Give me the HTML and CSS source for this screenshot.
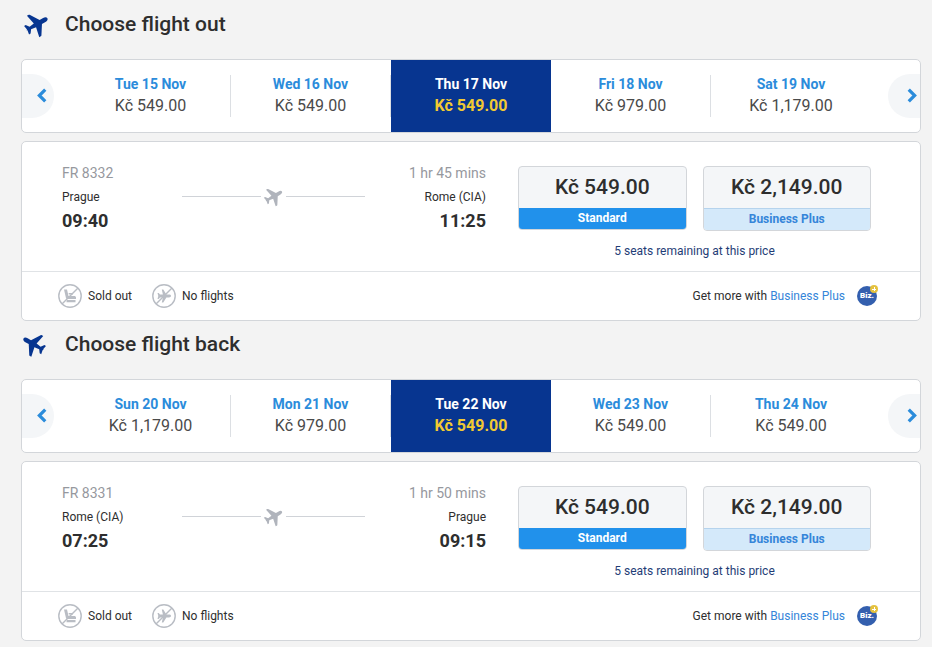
FILE: index.html
```
<!DOCTYPE html>
<html lang="en">

<head>
    <meta charset="utf-8">
    <title>Choose flights</title>
    <link rel="stylesheet" href="styles.css">
</head>

<body>

    <!-- Shared icons -->
    <svg class="sprite" aria-hidden="true">
        <symbol id="plane" viewBox="0 0 24 24">
            <path transform="rotate(60 12 12)" d="M12 .8c-1.300 0-2.100 1.500-2.100 3.200v3.600L1.500 13c-.4.300-.5.600-.5 1v1.500l9-1.900.7 4.700-3.100 2.300v1.600l4-.7.4.800.4-.8 4 .7v-1.600l-3.100-2.300.7-4.700 9 1.900V14c0-.4-.1-.7-.5-1l-8.400-5.400V4C14.100 2.300 13.300.8 12 .8z"/>
        </symbol>
        <symbol id="chevron" viewBox="0 0 10 14">
            <path d="M8.500 1.500L3 7l5.500 5.500" fill="none" stroke="#2b8cdb" stroke-width="3"/>
        </symbol>
        <symbol id="sold-out" viewBox="0 0 24 24">
            <circle cx="12" cy="12" r="11.200" fill="none" stroke="#b9bdc4" stroke-width="1.400"/>
            <path d="M6 5.500h3l1.500 6.500h5.500c1.200 0 2 .6 2 1.400v1.600H9.500c-.9 0-1.400-.4-1.600-1.200zM10.500 9h4.500v1.500h-4zM9 16h8.500v2.200H8.500c0-1.200.1-1.600.5-2.200z" fill="#b9bdc4"/>
            <path d="M4 20L20 4" stroke="#b9bdc4" stroke-width="1.400"/>
        </symbol>
        <symbol id="no-flights" viewBox="0 0 24 24">
            <circle cx="12" cy="12" r="11.200" fill="none" stroke="#b9bdc4" stroke-width="1.400"/>
            <path d="M19 12c0-.9-1-1.400-2-1.400h-2.600L11.300 5.500H9.800l1.100 5.100H8L6.700 9H5.500l.8 3-.8 3h1.200L8 13.400h2.900l-1.100 5.100h1.500l3.100-5.100H17c1 0 2-.5 2-1.400z" fill="#b9bdc4"/>
            <path d="M4 20L20 4" stroke="#b9bdc4" stroke-width="1.400"/>
        </symbol>
    </svg>

    <main>
        <section class="journey">
            <h2><svg class="heading-icon"><use href="#plane"/></svg>Choose flight out</h2>

            <div class="carousel">
                <button class="arrow prev" aria-label="Earlier dates"><svg><use href="#chevron"/></svg></button>
                <div class="days">
                    <button class="day"><span class="date">Tue 15 Nov</span><span class="price">Kč 549.00</span></button>
                    <button class="day"><span class="date">Wed 16 Nov</span><span class="price">Kč 549.00</span></button>
                    <button class="day selected"><span class="date">Thu 17 Nov</span><span class="price">Kč 549.00</span></button>
                    <button class="day"><span class="date">Fri 18 Nov</span><span class="price">Kč 979.00</span></button>
                    <button class="day"><span class="date">Sat 19 Nov</span><span class="price">Kč 1,179.00</span></button>
                </div>
                <button class="arrow next" aria-label="Later dates"><svg><use href="#chevron"/></svg></button>
            </div>

            <div class="flight">
                <div class="flight-main">
                    <div class="route">
                        <div class="stop">
                            <div class="meta">FR 8332</div>
                            <div class="city">Prague</div>
                            <div class="time">09:40</div>
                        </div>
                        <div class="line"><svg><use href="#plane"/></svg></div>
                        <div class="stop arrive">
                            <div class="meta">1 hr 45 mins</div>
                            <div class="city">Rome (CIA)</div>
                            <div class="time">11:25</div>
                        </div>
                    </div>
                    <div class="fares">
                        <div class="fare-list">
                            <button class="fare standard"><span class="amount">Kč 549.00</span><span class="name">Standard</span></button>
                            <button class="fare business"><span class="amount">Kč 2,149.00</span><span class="name">Business Plus</span></button>
                        </div>
                        <p class="seats">5 seats remaining at this price</p>
                    </div>
                </div>
                <div class="flight-footer">
                    <span class="legend"><svg><use href="#sold-out"/></svg>Sold out</span>
                    <span class="legend"><svg><use href="#no-flights"/></svg>No flights</span>
                    <span class="more">Get more with <a href="#">Business Plus</a><span class="biz">Biz.</span></span>
                </div>
            </div>
        </section>

        <section class="journey back">
            <h2><svg class="heading-icon"><use href="#plane"/></svg>Choose flight back</h2>

            <div class="carousel">
                <button class="arrow prev" aria-label="Earlier dates"><svg><use href="#chevron"/></svg></button>
                <div class="days">
                    <button class="day"><span class="date">Sun 20 Nov</span><span class="price">Kč 1,179.00</span></button>
                    <button class="day"><span class="date">Mon 21 Nov</span><span class="price">Kč 979.00</span></button>
                    <button class="day selected"><span class="date">Tue 22 Nov</span><span class="price">Kč 549.00</span></button>
                    <button class="day"><span class="date">Wed 23 Nov</span><span class="price">Kč 549.00</span></button>
                    <button class="day"><span class="date">Thu 24 Nov</span><span class="price">Kč 549.00</span></button>
                </div>
                <button class="arrow next" aria-label="Later dates"><svg><use href="#chevron"/></svg></button>
            </div>

            <div class="flight">
                <div class="flight-main">
                    <div class="route">
                        <div class="stop">
                            <div class="meta">FR 8331</div>
                            <div class="city">Rome (CIA)</div>
                            <div class="time">07:25</div>
                        </div>
                        <div class="line"><svg><use href="#plane"/></svg></div>
                        <div class="stop arrive">
                            <div class="meta">1 hr 50 mins</div>
                            <div class="city">Prague</div>
                            <div class="time">09:15</div>
                        </div>
                    </div>
                    <div class="fares">
                        <div class="fare-list">
                            <button class="fare standard"><span class="amount">Kč 549.00</span><span class="name">Standard</span></button>
                            <button class="fare business"><span class="amount">Kč 2,149.00</span><span class="name">Business Plus</span></button>
                        </div>
                        <p class="seats">5 seats remaining at this price</p>
                    </div>
                </div>
                <div class="flight-footer">
                    <span class="legend"><svg><use href="#sold-out"/></svg>Sold out</span>
                    <span class="legend"><svg><use href="#no-flights"/></svg>No flights</span>
                    <span class="more">Get more with <a href="#">Business Plus</a><span class="biz">Biz.</span></span>
                </div>
            </div>
        </section>
    </main>

</body>

</html>
```
FILE: styles.css
```
* {
    box-sizing: border-box;
}

body {
    margin: 0;
    padding: 1px 11px 6px 21px;
    font-family: Roboto, sans-serif;
    font-size: 12px;
    color: #2e2e2e;
    background-color: #f3f3f3;
}

button {
    padding: 0;
    border: none;
    background: none;
    font-family: inherit;
    color: inherit;
    cursor: pointer;
}

.sprite {
    position: absolute;
    width: 0;
    height: 0;
}

h2 {
    display: flex;
    align-items: center;
    gap: 15px;
    margin: 0 0 12px;
    padding-left: 2px;
    font-size: 21px;
    font-weight: 500;
    line-height: 46px;
}

.heading-icon {
    width: 27px;
    height: 27px;
    fill: #073590;
}

.back h2 {
    gap: 18px;
    padding-left: 0;
}

.back .heading-icon {
    width: 26px;
    transform: scaleX(-1);
}

/* Date carousel */
.carousel {
    display: flex;
    align-items: center;
    gap: 17px;
    height: 74px;
    border: 1px solid #d3d6da;
    border-radius: 5px;
    background-color: #fff;
}

.arrow {
    display: flex;
    align-items: center;
    justify-content: flex-end;
    width: 32px;
    height: 44px;
    padding-right: 7px;
    padding-bottom: 2px;
    background-color: #f4f6f8;
    border-radius: 0 22px 22px 0;
}

.arrow svg {
    width: 11px;
    height: 15px;
}

.next {
    padding-right: 2px;
    border-radius: 22px 0 0 22px;
}

.next svg {
    transform: scaleX(-1);
}

.days {
    display: grid;
    grid-template-columns: repeat(5, 1fr);
    align-items: center;
    flex: 1;
}

.day {
    display: flex;
    flex-direction: column;
    align-items: center;
    justify-content: center;
    height: 42px;
    padding-bottom: 2px;
    border-right: 1px solid #dcdfe3;
    line-height: 22px;
}

.day:last-child {
    border-right: none;
}

.date {
    font-size: 14px;
    font-weight: 700;
    color: #2b8cdb;
}

.price {
    font-size: 16px;
    color: #4a4a4a;
}

.selected {
    height: 72px;
    border-right: none;
    background-color: #073590;
}

.selected .date {
    color: #fff;
}

.selected .price {
    font-weight: 700;
    color: #f1c933;
}

/* Flight card */
.flight {
    margin-top: 8px;
    border: 1px solid #d3d6da;
    border-radius: 5px;
    background-color: #fff;
}

.flight-main {
    display: flex;
    gap: 32px;
    height: 129px;
    padding: 0 49px 0 40px;
}

.route {
    display: grid;
    grid-template-columns: 120px 1fr 121px;
    flex: 1;
    padding-top: 19px;
}

.stop {
    line-height: 24px;
}

.arrive {
    text-align: right;
}

.meta {
    font-size: 14px;
    color: #96989e;
}

.time {
    font-size: 18px;
    font-weight: 700;
}

.line {
    display: flex;
    align-items: center;
    gap: 2px;
    height: 71px;
}

.line::before,
.line::after {
    content: "";
    flex: 1;
    height: 1px;
    background-color: #d0d3d8;
}

.line svg {
    width: 21px;
    height: 21px;
    fill: #b0b4bc;
}

.fares {
    width: 353px;
    padding-top: 24px;
}

.fare-list {
    display: grid;
    grid-template-columns: 1fr 1fr;
    align-items: start;
    gap: 16px;
}

.fare {
    display: flex;
    flex-direction: column;
    overflow: hidden;
    border: 1px solid #d3d6da;
    border-radius: 4px;
    background-color: #f4f6f8;
}

.fare span {
    width: 100%;
}

.amount {
    font-size: 21px;
    font-weight: 500;
    line-height: 41px;
}

.name {
    font-size: 12px;
    font-weight: 700;
    line-height: 21px;
}

.standard .name {
    color: #fff;
    background-color: #2191eb;
}

.business .name {
    border-top: 1px solid #b5d3ed;
    color: #3585d9;
    background-color: #d4e9fa;
}

.seats {
    margin: 9px 0 0;
    line-height: 22px;
    text-align: center;
    color: #1f3d76;
}

.flight-footer {
    display: flex;
    align-items: center;
    height: 49px;
    padding: 0 43px 0 36px;
    border-top: 1px solid #e0e3e6;
}

.legend {
    display: flex;
    align-items: center;
    gap: 6px;
    margin-right: 20px;
}

.legend svg {
    width: 24px;
    height: 24px;
}

.more {
    display: flex;
    align-items: center;
    margin-left: auto;
    white-space: pre;
}

.more a {
    color: #3585d9;
    text-decoration: none;
}

.biz {
    position: relative;
    width: 20px;
    height: 20px;
    margin-left: 12px;
    border-radius: 50%;
    font-size: 8px;
    font-weight: 900;
    line-height: 20px;
    text-align: center;
    color: #fff;
    background-color: #335fae;
}

/* Yellow plus badge */
.biz::after {
    content: "";
    position: absolute;
    top: -1px;
    right: -1px;
    width: 8px;
    height: 8px;
    border-radius: 50%;
    background:
        linear-gradient(#fff, #fff) center / 4px 1px no-repeat,
        linear-gradient(#fff, #fff) center / 1px 4px no-repeat,
        #e5c23f;
}
```
